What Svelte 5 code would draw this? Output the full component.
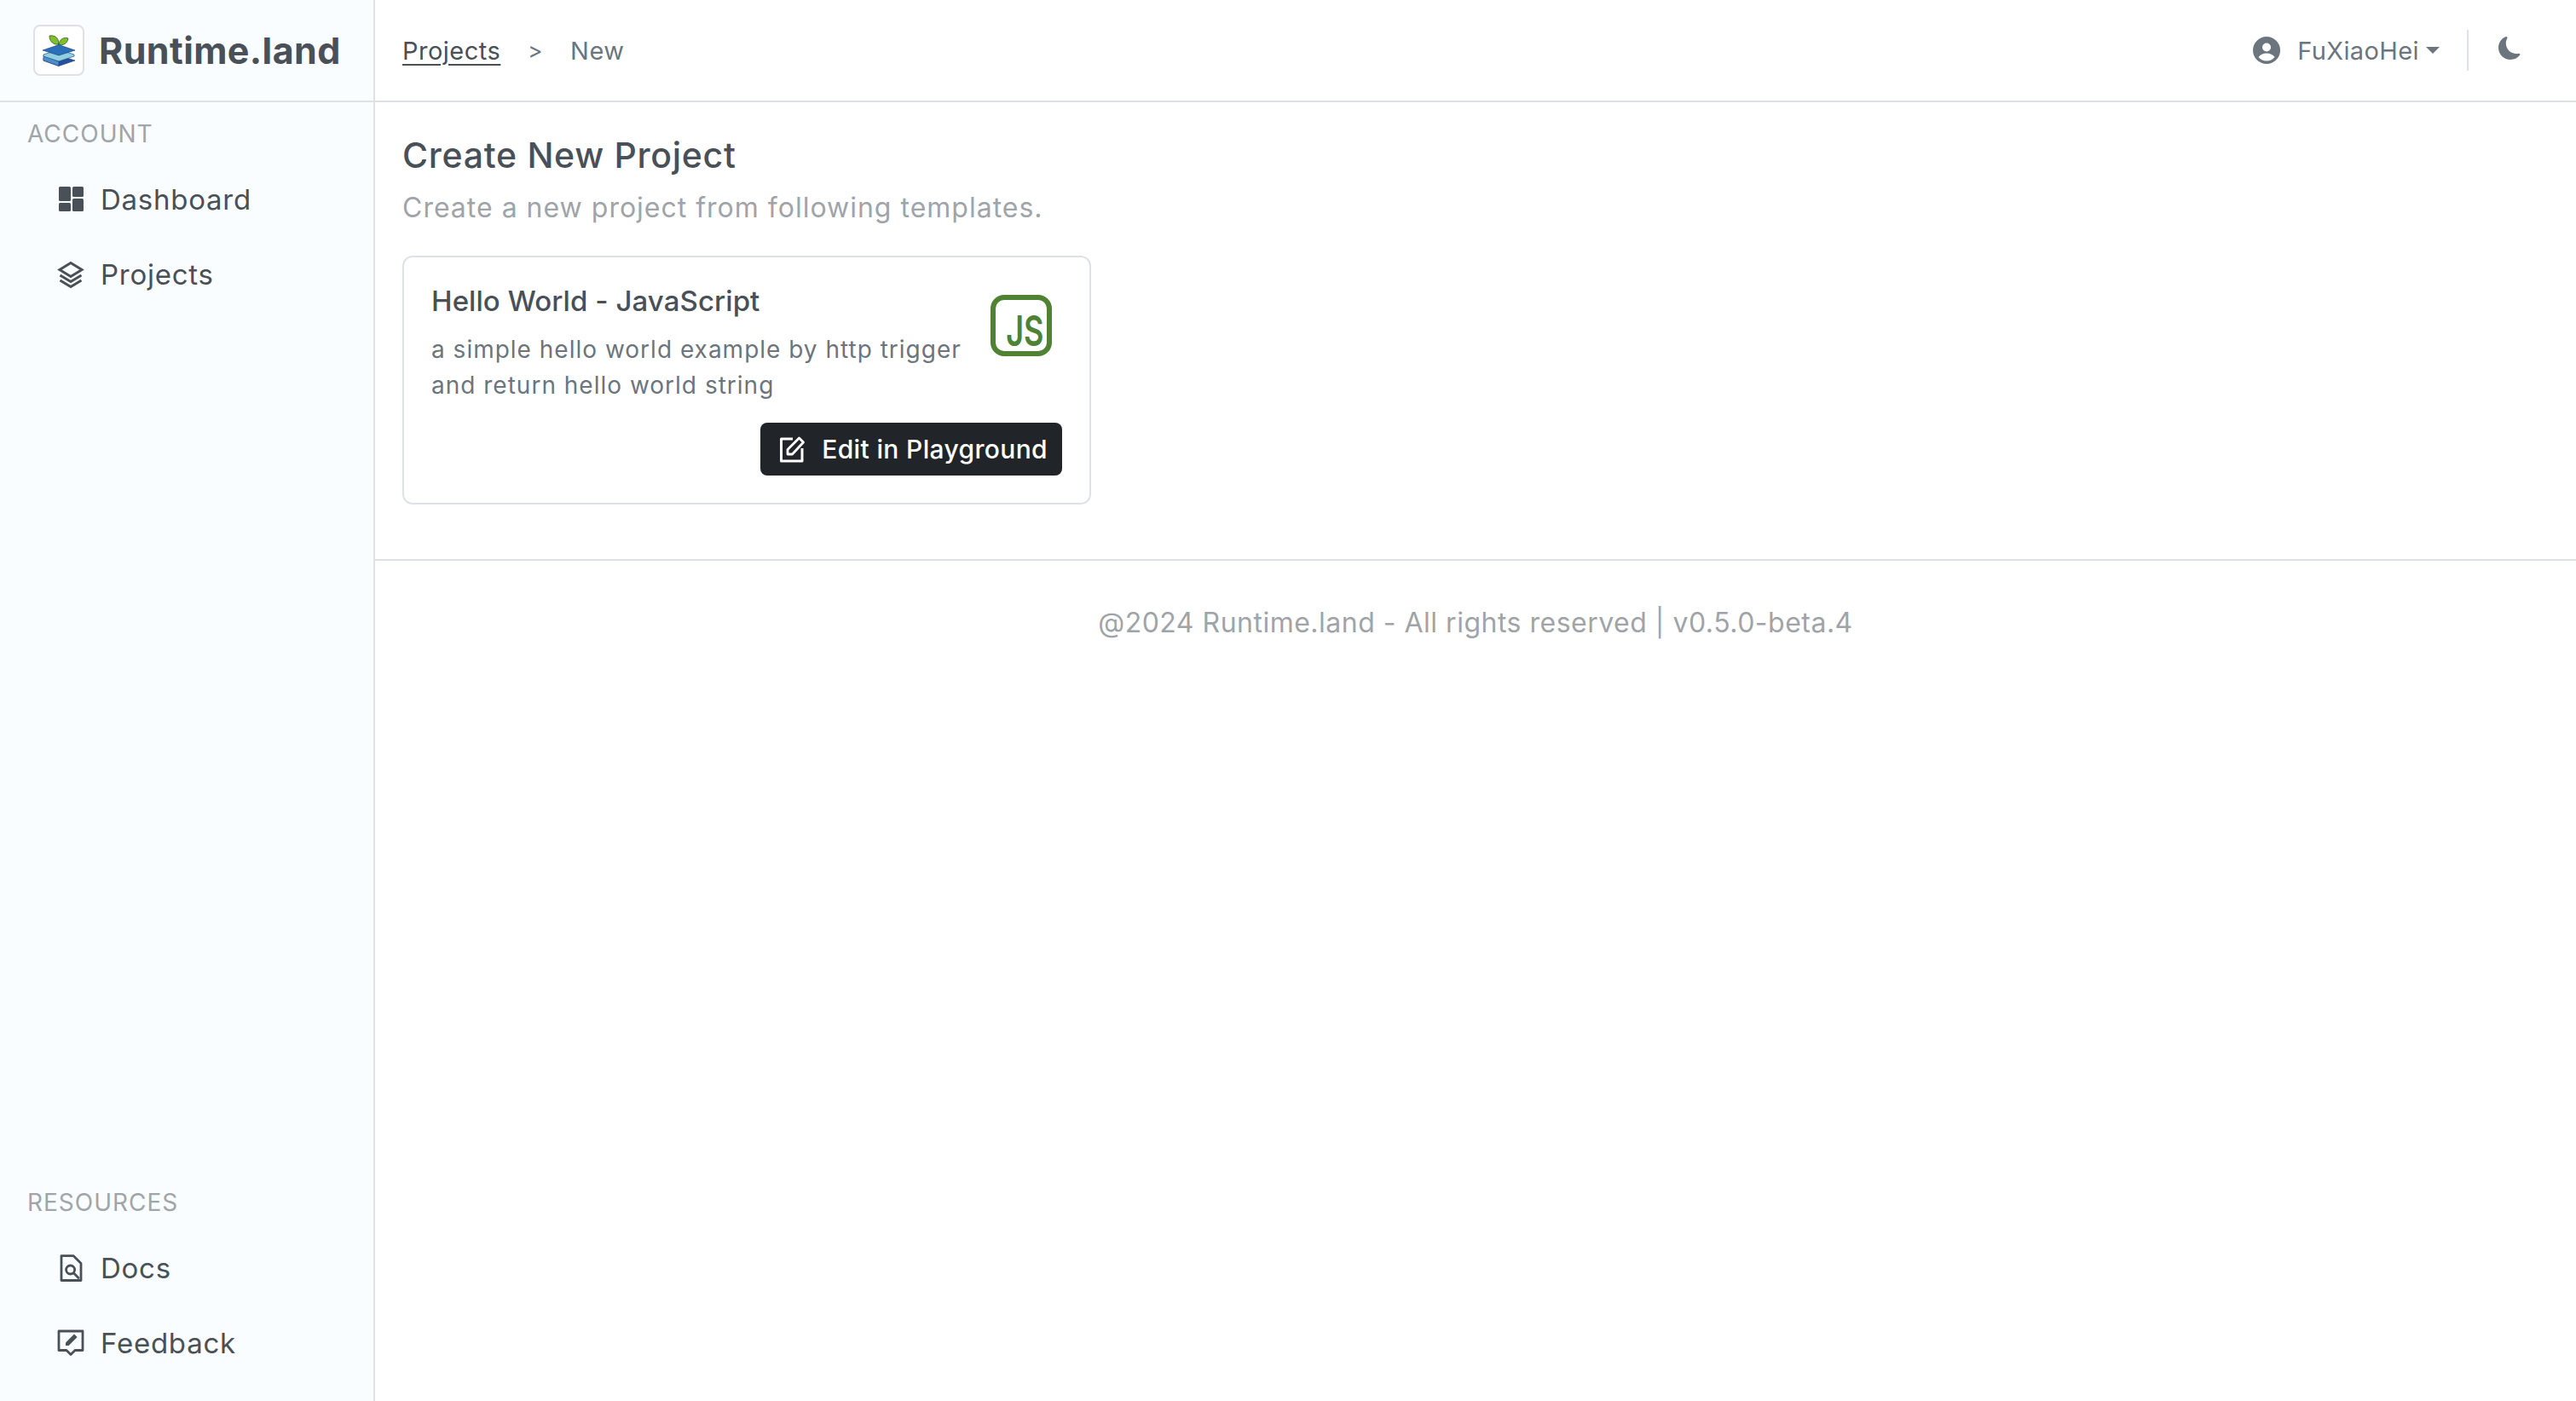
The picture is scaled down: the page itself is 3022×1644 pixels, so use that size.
<script lang="ts">
	const accountLinks = ['Dashboard', 'Projects'];
	const resourceLinks = ['Docs', 'Feedback'];
</script>

{#snippet navIcon(name: string)}
	<svg class="nav-icon" viewBox="0 0 32 32" aria-hidden="true">
		{#if name === 'Dashboard'}
			<rect x="2" y="1" width="14" height="17" rx="1.5" fill="currentColor" />
			<rect x="2" y="20" width="14" height="10" rx="1.5" fill="currentColor" />
			<rect x="18" y="1" width="13" height="12" rx="1.5" fill="currentColor" />
			<rect x="18" y="15" width="13" height="15" rx="1.5" fill="currentColor" />
		{:else if name === 'Projects'}
			<g fill="none" stroke="currentColor" stroke-width="3" stroke-linejoin="miter">
				<path d="M16 2.500 29 10.500 16 18.500 3 10.500Z" />
				<path d="M3.500 17 16 24.500 28.500 17" />
				<path d="M3.500 23 16 30.500 28.500 23" />
			</g>
		{:else if name === 'Docs'}
			<g fill="none" stroke="currentColor" stroke-width="2.800" stroke-linejoin="round" stroke-linecap="round">
				<path d="M5 1.600H19L28 10.500V30.500H5Z" />
				<circle cx="15.600" cy="18" r="5" />
				<path d="M19.400 21.800 25 27.400" />
			</g>
		{:else}
			<g fill="none" stroke="currentColor" stroke-width="2.800" stroke-linejoin="round">
				<path d="M2 2H30V24.500H21L16 29.500 11 24.500H2Z" />
			</g>
			<path d="M10 19v-3.600L20 5.500l3.600 3.600L13.600 19Z" fill="currentColor" />
		{/if}
	</svg>
{/snippet}

<div class="shell">
	<aside class="sidebar">
		<div class="brand">
			<div class="logo">
				<svg viewBox="0 0 56 56" aria-hidden="true">
					<path d="M17 11c6-1 11 2 11 10-6 1-11-3-11-10Z" fill="#7fbf2e" stroke="#2f5d14" stroke-width="0.800" />
					<path d="M39 14c-5-2-10 1-11 7 5 2 10-1 11-7Z" fill="#7fbf2e" stroke="#2f5d14" stroke-width="0.800" />
					<path d="M28 20v6" stroke="#1d4f91" stroke-width="1.200" />
					<path d="M10 37V40L28 46.500 47 40 28 34Z" fill="#264f9e" stroke="#173a78" stroke-width="0.600" />
					<path d="M10 34V40L28 46.500V41Z" fill="#4c8cc8" stroke="#173a78" stroke-width="0.600" />
					<path d="M10 33 28 27 46 33 46 35 28 41 10 35Z" fill="#8fd0e0" stroke="#173a78" stroke-width="0.600" />
					<path d="M9 28 28 21.500 47 28 28 34Z" fill="#2a6fb8" stroke="#173a78" stroke-width="0.600" />
				</svg>
			</div>
			<span class="brand-name">Runtime.land</span>
		</div>

		<div class="nav-group">
			<div class="nav-label">ACCOUNT</div>
			{#each accountLinks as link}
				<a class="nav-link" href="#top">
					{@render navIcon(link)}
					<span>{link}</span>
				</a>
			{/each}
		</div>

		<div class="nav-group bottom">
			<div class="nav-label">RESOURCES</div>
			{#each resourceLinks as link}
				<a class="nav-link" href="#top">
					{@render navIcon(link)}
					<span>{link}</span>
				</a>
			{/each}
		</div>
	</aside>

	<main class="main">
		<header class="topbar">
			<nav class="crumbs">
				<a href="#top">Projects</a>
				<span class="sep">&gt;</span>
				<span>New</span>
			</nav>
			<div class="user">
				<svg class="avatar" viewBox="0 0 32 32" aria-hidden="true">
					<circle cx="16" cy="16" r="16" fill="currentColor" />
					<circle cx="16" cy="12.500" r="5" fill="#fff" />
					<path d="M6.500 24c2-3 5.500-4.500 9.500-4.500s7.500 1.500 9.500 4.500c-2.500 3-6 4.500-9.500 4.500s-7-1.500-9.500-4.500Z" fill="#fff" />
				</svg>
				<span class="user-name">FuXiaoHei</span>
				<span class="caret"></span>
			</div>
			<div class="divider"></div>
			<svg class="moon" viewBox="0 0 16 16" aria-hidden="true">
				<path fill="currentColor" d="M6 .278a.768.768 0 0 1 .08.858 7.208 7.208 0 0 0-.878 3.46c0 4.021 3.278 7.277 7.318 7.277.527 0 1.04-.055 1.533-.16a.787.787 0 0 1 .81.316.733.733 0 0 1-.031.893A8.349 8.349 0 0 1 8.344 16C3.734 16 0 12.286 0 7.710 0 4.266 2.114 1.312 5.124.060A.752.752 0 0 1 6 .278z" />
			</svg>
		</header>

		<section class="content">
			<h1>Create New Project</h1>
			<p class="lead">Create a new project from following templates.</p>

			<div class="card">
				<div class="card-top">
					<div class="card-text">
						<h2>Hello World - JavaScript</h2>
						<p>a simple hello world example by http trigger and return hello world string</p>
					</div>
					<div class="js-badge"><span>JS</span></div>
				</div>
				<div class="card-actions">
					<button type="button" class="edit">
						<svg viewBox="0 0 32 32" aria-hidden="true">
							<path d="M17 4H3.500V30H28V15" fill="none" stroke="currentColor" stroke-width="3" stroke-linejoin="round" />
							<path d="M11 22v-5.500L24.500 3l5 5L16.500 22Z" fill="none" stroke="currentColor" stroke-width="2.800" stroke-linejoin="round" />
						</svg>
						<span>Edit in Playground</span>
					</button>
				</div>
			</div>
		</section>

		<footer class="footer">@2024 Runtime.land - All rights reserved | v0.5.0-beta.4</footer>
	</main>
</div>

<style>
	:global(body) {
		margin: 0;
		background: #fff;
		font-family: Inter, "Noto Sans", sans-serif;
		color: #495057;
	}

	.shell {
		display: flex;
		min-height: 1644px;
	}

	.sidebar {
		box-sizing: border-box;
		flex: none;
		width: 440px;
		display: flex;
		flex-direction: column;
		background: #f9fdff;
		border-right: 2px solid #dee2e6;
	}

	.brand {
		box-sizing: border-box;
		height: 120px;
		display: flex;
		align-items: center;
		gap: 17px;
		padding-left: 39px;
		border-bottom: 2px solid #dee2e6;
	}

	.logo {
		box-sizing: border-box;
		width: 60px;
		height: 60px;
		background: #fff;
		border: 2px solid #dee2e6;
		border-radius: 8px;
	}

	.logo svg {
		display: block;
		width: 56px;
		height: 56px;
	}

	.brand-name {
		font-size: 43px;
		font-weight: 700;
		letter-spacing: 0.4px;
	}

	.nav-group {
		padding-top: 20px;
	}

	.nav-group.bottom {
		margin-top: auto;
		padding-bottom: 24px;
	}

	.nav-label {
		padding-left: 32px;
		font-size: 28px;
		line-height: 34px;
		color: #a0a5aa;
		letter-spacing: 1px;
		margin-bottom: 16px;
	}

	.nav-link {
		display: flex;
		align-items: center;
		height: 88px;
		gap: 19px;
		padding-left: 67px;
		font-size: 33px;
		letter-spacing: 0.75px;
		color: #495057;
		text-decoration: none;
	}

	.nav-icon {
		flex: none;
		width: 32px;
		height: 32px;
	}

	.main {
		flex: 1;
		min-width: 0;
	}

	.topbar {
		box-sizing: border-box;
		height: 120px;
		display: flex;
		align-items: center;
		padding: 0 64px 0 32px;
		border-bottom: 2px solid #dee2e6;
		font-size: 29px;
		color: #6c757d;
	}

	.crumbs {
		display: flex;
		align-items: center;
		gap: 32px;
		margin-right: auto;
		letter-spacing: 0.5px;
	}

	.crumbs a {
		color: #495057;
		text-decoration: underline;
		text-underline-offset: 5px;
	}

	.sep {
		font-size: 26px;
	}

	.user {
		display: flex;
		align-items: center;
	}

	.avatar {
		width: 32px;
		height: 32px;
		margin-right: 20px;
	}

	.user-name {
		letter-spacing: 0.4px;
	}

	.caret {
		width: 0;
		height: 0;
		margin-left: 8px;
		border: 8px solid transparent;
		border-top-color: currentColor;
		border-bottom-width: 0;
	}

	.divider {
		width: 2px;
		height: 48px;
		margin: 0 35px 0 32px;
		background: #dee2e6;
	}

	.moon {
		width: 27px;
		height: 27px;
		margin-bottom: 6px;
	}

	.content {
		box-sizing: border-box;
		height: 538px;
		padding: 37px 32px 0;
		border-bottom: 2px solid #dee2e6;
	}

	h1 {
		margin: 0;
		font-size: 41px;
		font-weight: 500;
		line-height: 50px;
		letter-spacing: 0.7px;
	}

	.lead {
		margin: 13px 0 0;
		font-size: 32px;
		line-height: 48px;
		color: #9fa4a9;
		letter-spacing: 1px;
	}

	.card {
		box-sizing: border-box;
		width: 808px;
		height: 292px;
		margin-top: 32px;
		padding: 31px 32px 32px;
		background: #fff;
		border: 2px solid #dee2e6;
		border-radius: 12px;
	}

	.card-top {
		display: flex;
		align-items: flex-start;
		justify-content: space-between;
	}

	.card-text {
		width: 640px;
	}

	h2 {
		margin: 0;
		font-size: 33px;
		font-weight: 500;
		line-height: 40px;
		letter-spacing: 0.07px;
	}

	.card-text p {
		margin: 16px 0 0;
		font-size: 28px;
		line-height: 42px;
		color: #6c757d;
		letter-spacing: 1px;
	}

	.js-badge {
		box-sizing: border-box;
		display: flex;
		align-items: flex-end;
		justify-content: flex-end;
		flex: none;
		width: 72px;
		height: 72px;
		margin: 13px 12px 0 0;
		padding: 0 4px 2px 0;
		border: 6px solid #4f8233;
		border-radius: 16px;
		color: #4f8233;
		font-size: 50px;
		font-weight: 600;
		line-height: 44px;
	}

	.js-badge span {
		display: block;
		transform: scaleX(0.72);
		transform-origin: right bottom;
	}

	.card-actions {
		display: flex;
		justify-content: flex-end;
		margin-top: 23px;
	}

	.edit {
		display: flex;
		align-items: center;
		gap: 19px;
		height: 62px;
		padding: 0 17px 0 21px;
		font: inherit;
		font-size: 30px;
		font-weight: 500;
		letter-spacing: 0.35px;
		color: #fff;
		background: #212529;
		border: none;
		border-radius: 8px;
	}

	.edit svg {
		width: 32px;
		height: 32px;
	}

	.footer {
		padding-top: 49px;
		font-size: 32px;
		line-height: 48px;
		text-align: center;
		color: #9fa4a9;
		letter-spacing: 0.5px;
	}
</style>
